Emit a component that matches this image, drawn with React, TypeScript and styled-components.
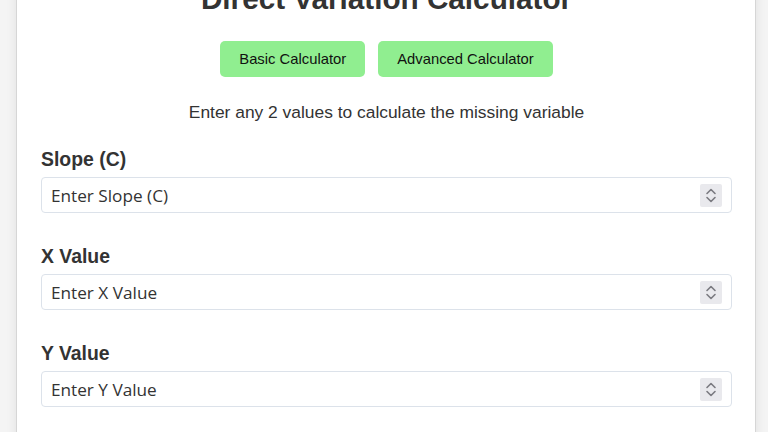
import React, { FC } from "react";
import styled, { createGlobalStyle } from "styled-components";

const GlobalStyle = createGlobalStyle`
  html, body {
    margin: 0;
    padding: 0;
    background: #f4f4f4;
    font-family: "Liberation Sans", Arial, sans-serif;
    color: #333;
  }
`;

const Page = styled.div`
  padding: 0 12px 40px 16px;
`;

const Card = styled.div`
  margin-top: -20px;
  background: #fff;
  border: 1px solid #d6d6d6;
  border-radius: 8px;
  box-shadow: 0 0 12px rgba(0, 0, 0, 0.08);
  padding: 0 23px 30px 24px;
`;

const Title = styled.h1`
  margin: 0 0 25px;
  text-align: center;
  font-size: 29.7px;
  line-height: 35px;
  font-weight: 700;
  color: #333;
`;

const ButtonRow = styled.div`
  display: flex;
  justify-content: center;
  gap: 13px;
`;

const ModeButton = styled.button`
  height: 36px;
  padding: 0 19px;
  border: none;
  border-radius: 5px;
  background: #90ee90;
  color: #111;
  font-family: "Liberation Sans", Arial, sans-serif;
  font-size: 14.8px;
  cursor: pointer;
`;

const Hint = styled.p`
  margin: 25px 0 26px;
  text-align: center;
  font-size: 17.4px;
  line-height: 20px;
  color: #333;
`;

const Field = styled.div`
  margin-bottom: 32px;
`;

const Label = styled.label`
  display: block;
  margin-bottom: 7px;
  font-size: 19.4px;
  line-height: 22px;
  font-weight: 700;
  color: #333;
`;

const InputBox = styled.div`
  display: flex;
  align-items: center;
  height: 36px;
  box-sizing: border-box;
  border: 1px solid #dce2ea;
  border-radius: 4px;
  padding: 0 9px;
  background: #fff;
`;

const NumberInput = styled.input`
  flex: 1;
  min-width: 0;
  border: none;
  outline: none;
  padding: 0;
  background: transparent;
  font-family: "Open Sans", "Noto Sans", sans-serif;
  font-size: 17.2px;
  color: #333;
  appearance: textfield;
  -moz-appearance: textfield;

  &::placeholder {
    color: #333;
    opacity: 1;
  }
  &::-webkit-outer-spin-button,
  &::-webkit-inner-spin-button {
    -webkit-appearance: none;
    margin: 0;
  }
`;

const Spinner = styled.div`
  width: 22px;
  height: 23px;
  background: #e9e9ed;
  border-radius: 2px;
  display: flex;
  align-items: center;
  justify-content: center;
`;

const Chevrons: FC = () => (
  <svg width="12" height="17" viewBox="0 0 12 17" fill="none">
    <path d="M2 6.5 L6 2.5 L10 6.5" stroke="#7a7a80" strokeWidth="1.6" strokeLinecap="round" strokeLinejoin="round" />
    <path d="M2 10.5 L6 14.5 L10 10.5" stroke="#7a7a80" strokeWidth="1.6" strokeLinecap="round" strokeLinejoin="round" />
  </svg>
);

const fields = [
  { id: "slope", label: "Slope (C)" },
  { id: "x", label: "X Value" },
  { id: "y", label: "Y Value" },
];

const App: FC = () => (
  <Page>
    <GlobalStyle />
    <Card>
      <Title>Direct Variation Calculator</Title>
      <ButtonRow>
        <ModeButton>Basic Calculator</ModeButton>
        <ModeButton>Advanced Calculator</ModeButton>
      </ButtonRow>
      <Hint>Enter any 2 values to calculate the missing variable</Hint>
      {fields.map((f) => (
        <Field key={f.id}>
          <Label htmlFor={f.id}>{f.label}</Label>
          <InputBox>
            <NumberInput id={f.id} type="number" placeholder={`Enter ${f.label}`} />
            <Spinner>
              <Chevrons />
            </Spinner>
          </InputBox>
        </Field>
      ))}
    </Card>
  </Page>
);

export default App;
